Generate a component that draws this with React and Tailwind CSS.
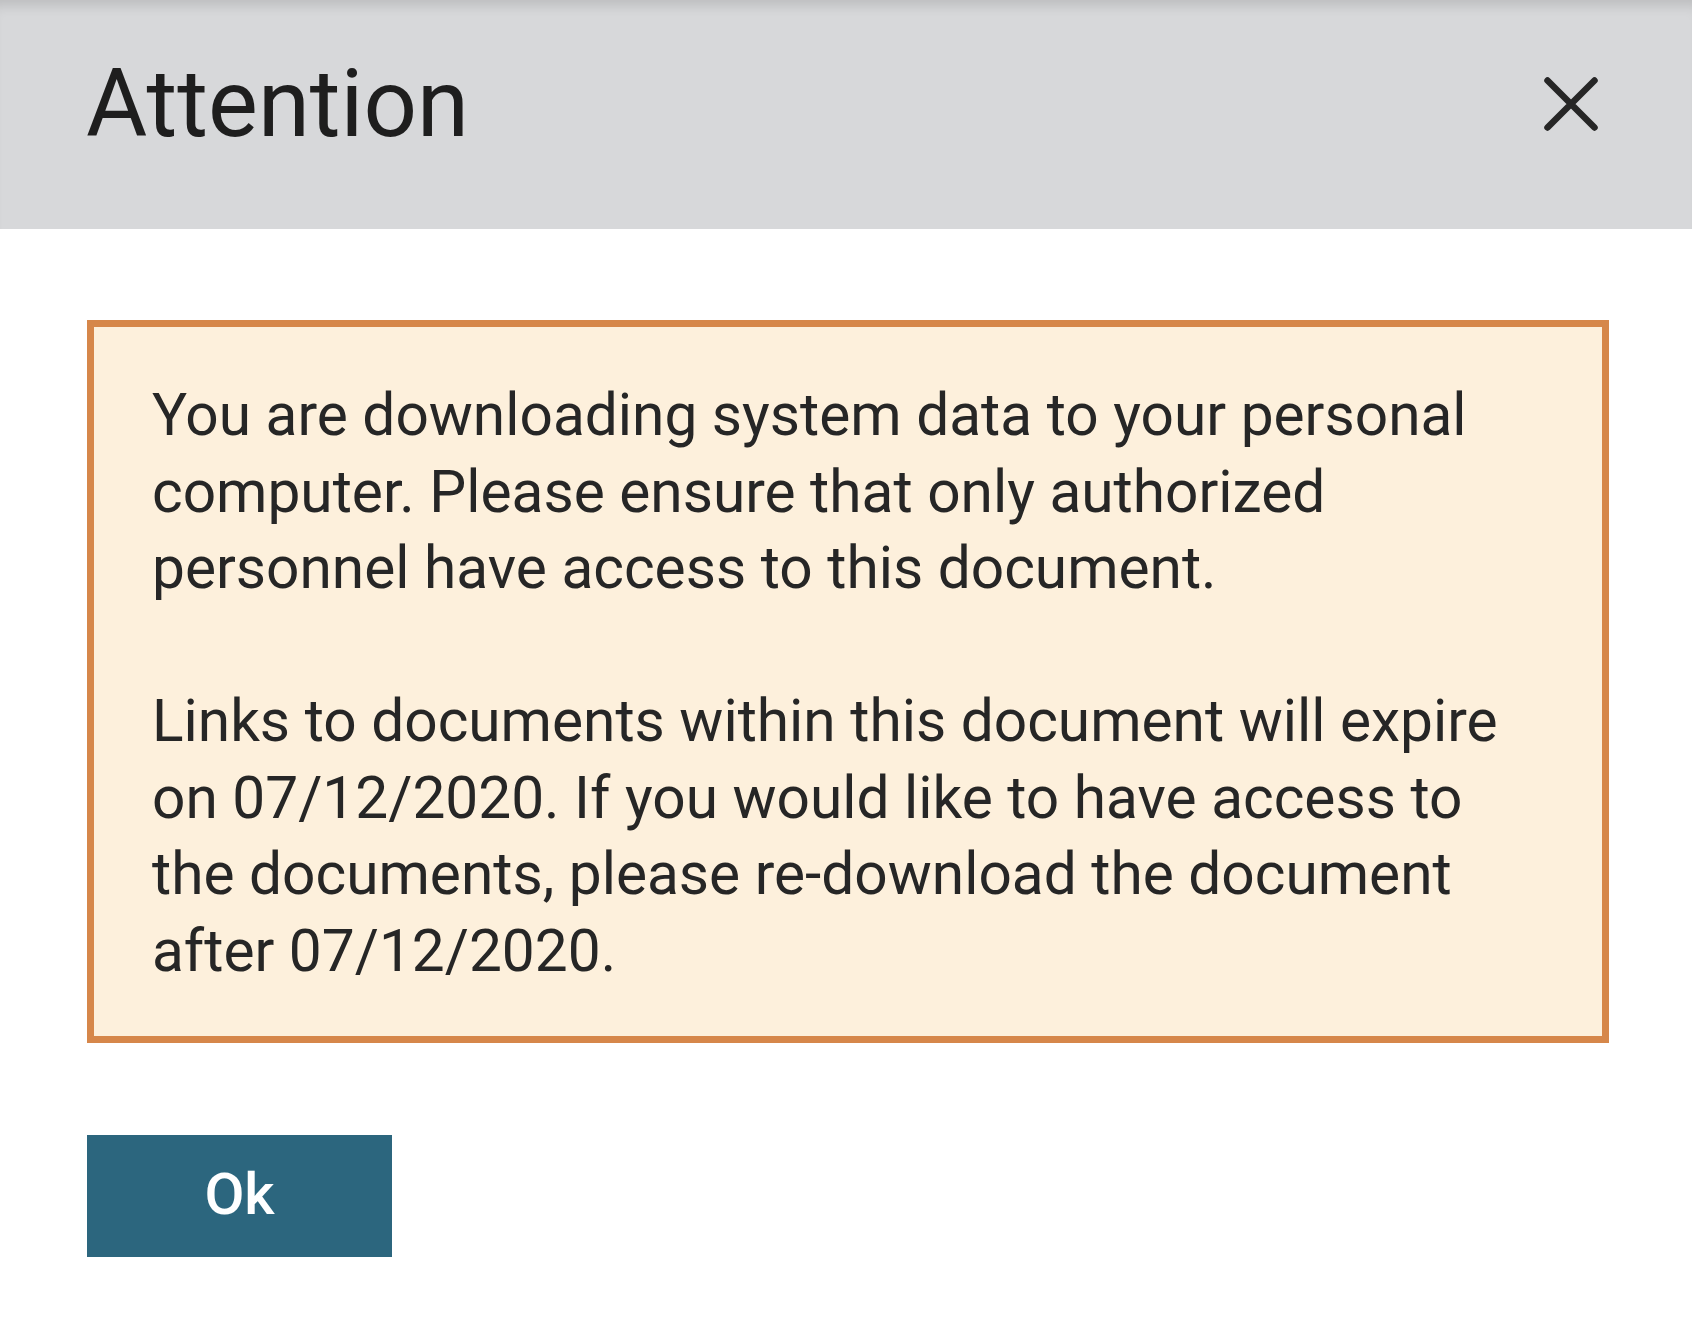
import React from "react";

const CloseIcon = () => (
  <svg width="54" height="54" viewBox="0 0 54 54" fill="none">
    <path
      d="M3.5 3.5L50.5 50.5M50.5 3.5L3.5 50.5"
      stroke="#262626"
      strokeWidth="6.5"
      strokeLinecap="round"
    />
  </svg>
);

const App = () => {
  return (
    <div
      className="min-h-[1336px] w-full bg-white"
      style={{ fontFamily: "Roboto, 'Noto Sans', sans-serif" }}
    >
      <div className="flex h-[229px] items-center justify-between bg-[#d7d8da] pb-[21px] pl-[86px] pr-[94px] shadow-[inset_0_14px_12px_-8px_rgba(0,0,0,0.12)]">
        <h1 className="text-[94px] leading-none font-normal text-[#1e1e1e]">
          Attention
        </h1>
        <button className="flex items-center justify-center">
          <CloseIcon />
        </button>
      </div>

      <div className="pl-[87px] pr-[83px] pt-[91px]">
        <div className="border-[7px] border-[#d6874a] bg-[#fdf0dc] px-[58px] pt-[50px] pb-[47px] text-[58.6px] leading-[76.5px] text-[#262626]">
          <p>
            You are downloading system data to your personal computer. Please
            ensure that only authorized personnel have access to this document.
          </p>
          <p className="mt-[76.5px]">
            Links to documents within this document will expire on 07/12/2020.
            If you would like to have access to the documents, please
            re-download the document after 07/12/2020.
          </p>
        </div>

        <button className="mt-[92px] flex h-[122px] w-[305px] items-center justify-center bg-[#2c667e] pb-[4px] text-[58px] font-medium text-white">
          Ok
        </button>
      </div>
    </div>
  );
};

export default App;
